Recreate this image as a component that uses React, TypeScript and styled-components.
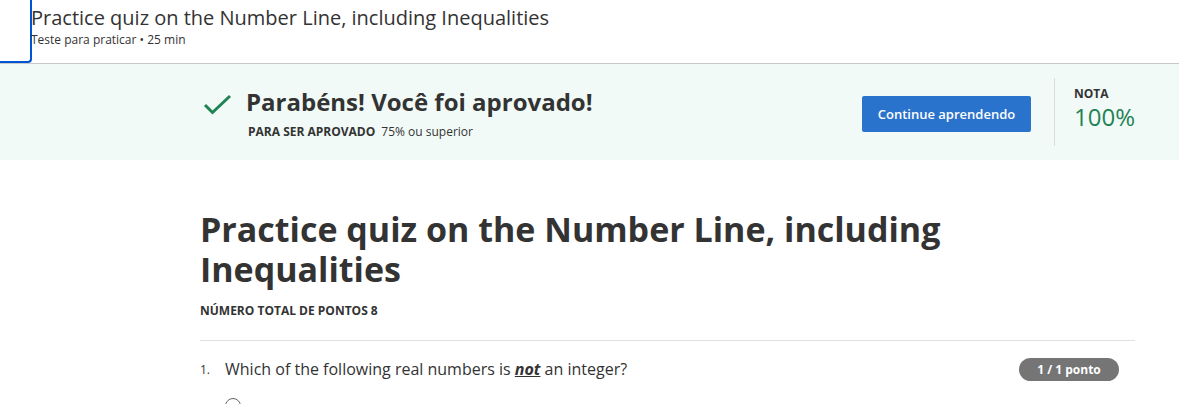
import React from "react";
import styled, { createGlobalStyle } from "styled-components";

const Global = createGlobalStyle`
  html, body { margin: 0; padding: 0; background: #fff; }
  body { font-family: "Open Sans", "Noto Sans", sans-serif; color: #333; }
  * { box-sizing: border-box; }
`;

const Page = styled.div`
  width: 1179px;
  height: 404px;
  overflow: hidden;
  background: #fff;
`;

const Header = styled.header`
  display: flex;
  align-items: flex-start;
  height: 64px;
  border-bottom: 1px solid #c8c8c8;
`;

const FocusTab = styled.div`
  width: 32px;
  height: 63px;
  flex: none;
  border-right: 2px solid #0056d2;
  border-bottom: 2px solid #0056d2;
  border-bottom-right-radius: 4px;
`;

const HeaderText = styled.div`
  display: flex;
  flex-direction: column;
  padding-top: 4px;
  margin-left: -1px;
`;

const HeaderTitle = styled.div`
  font-size: 20px;
  line-height: 28px;
  color: #333;
`;

const HeaderSub = styled.div`
  font-size: 12px;
  line-height: 16px;
  color: #333;
`;

const Banner = styled.section`
  background: #f1faf7;
  height: 96px;
  padding: 14px 44px 14px 200px;
  display: flex;
  align-items: stretch;
`;

const Status = styled.div`
  flex: 1;
  display: flex;
  align-items: flex-start;
  padding-top: 9px;
`;

const CheckIcon = styled.svg`
  width: 30px;
  height: 24px;
  margin: 6px 13px 0 3px;
  flex: none;
`;

const StatusText = styled.div`
  display: flex;
  flex-direction: column;
`;

const Congrats = styled.div`
  font-size: 24px;
  font-weight: 700;
  line-height: 30px;
  color: #333;
`;

const PassLine = styled.div`
  font-size: 12px;
  line-height: 16px;
  margin-top: 7px;
  padding-left: 2px;
  color: #333;
  display: flex;
  gap: 6px;
`;

const Strong = styled.span`
  font-weight: 700;
`;

const ButtonWrap = styled.div`
  display: flex;
  align-items: center;
  padding-top: 4px;
`;

const PrimaryButton = styled.button`
  width: 169px;
  height: 36px;
  background: #2a73cc;
  color: #fff;
  border: none;
  border-radius: 2px;
  font-family: "Open Sans", sans-serif;
  font-size: 13px;
  font-weight: 600;
  cursor: pointer;
  margin-left: 1px;
`;

const Divider = styled.div`
  width: 1px;
  background: #dcdcdc;
  margin: 0 19px 0 23px;
`;

const Grade = styled.div`
  display: flex;
  flex-direction: column;
  padding-top: 8px;
`;

const GradeLabel = styled.div`
  font-size: 12px;
  font-weight: 700;
  line-height: 16px;
  color: #333;
`;

const GradeValue = styled.div`
  font-size: 24px;
  line-height: 26px;
  margin-top: 2px;
  color: #1f8354;
`;

const Main = styled.main`
  padding: 49px 44px 0 200px;
`;

const QuizTitle = styled.h1`
  margin: 0;
  font-size: 34px;
  font-weight: 700;
  line-height: 40px;
  color: #333;
`;

const Points = styled.div`
  margin-top: 14px;
  font-size: 12px;
  font-weight: 700;
  line-height: 16px;
  color: #333;
`;

const Rule = styled.hr`
  border: none;
  border-top: 1px solid #e1e1e1;
  margin: 21px 0 0;
`;

const QuestionRow = styled.div`
  display: flex;
  align-items: center;
  margin-top: 16px;
`;

const Num = styled.span`
  width: 25px;
  font-size: 12px;
  color: #333;
  flex: none;
`;

const QText = styled.div`
  flex: 1;
  font-size: 16px;
  line-height: 24px;
  color: #333;
`;

const Em = styled.em`
  font-weight: 700;
  text-decoration: underline;
`;

const Badge = styled.span`
  width: 100px;
  height: 23px;
  border-radius: 12px;
  background: #757575;
  color: #fff;
  font-size: 12px;
  font-weight: 700;
  display: flex;
  align-items: center;
  justify-content: center;
  margin-right: 16px;
`;

const Radio = styled.div`
  width: 16px;
  height: 16px;
  border-radius: 50%;
  border: 1px solid #666;
  margin: 17px 0 0 25px;
`;

export default function App() {
  return (
    <Page>
      <Global />
      <Header>
        <FocusTab />
        <HeaderText>
          <HeaderTitle>Practice quiz on the Number Line, including Inequalities</HeaderTitle>
          <HeaderSub>Teste para praticar • 25 min</HeaderSub>
        </HeaderText>
      </Header>
      <Banner>
        <Status>
          <CheckIcon viewBox="0 0 30 24">
            <polyline points="2,12 9.5,19.5 27,3" fill="none" stroke="#1f8354" strokeWidth="3" />
          </CheckIcon>
          <StatusText>
            <Congrats>Parabéns! Você foi aprovado!</Congrats>
            <PassLine>
              <Strong>PARA SER APROVADO</Strong>
              <span>75% ou superior</span>
            </PassLine>
          </StatusText>
        </Status>
        <ButtonWrap>
          <PrimaryButton>Continue aprendendo</PrimaryButton>
        </ButtonWrap>
        <Divider />
        <Grade>
          <GradeLabel>NOTA</GradeLabel>
          <GradeValue>100%</GradeValue>
        </Grade>
      </Banner>
      <Main>
        <QuizTitle>Practice quiz on the Number Line, including Inequalities</QuizTitle>
        <Points>NÚMERO TOTAL DE PONTOS 8</Points>
        <Rule />
        <QuestionRow>
          <Num>1.</Num>
          <QText>
            Which of the following real numbers is <Em>not</Em> an integer?
          </QText>
          <Badge>1 / 1 ponto</Badge>
        </QuestionRow>
        <Radio />
      </Main>
    </Page>
  );
}
